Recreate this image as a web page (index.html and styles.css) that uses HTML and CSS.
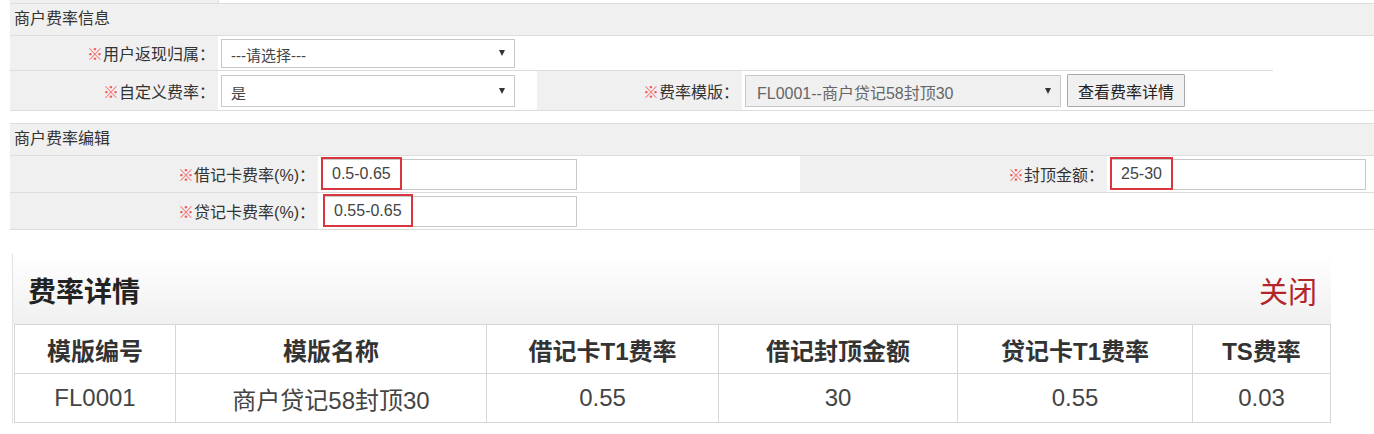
FILE: index.html
```html
<!DOCTYPE html>
<html lang="zh-CN">
<head>
    <meta charset="UTF-8">
    <title>商户费率</title>
    <link rel="stylesheet" href="styles.css">
</head>
<body>
    <div class="page">
        <div class="top-strip"><span class="strip-cell"></span></div>

        <section class="block">
            <div class="block-title">商户费率信息</div>
            <div class="row row-short">
                <div class="label w-208"><em>※</em>用户返现归属：</div>
                <div class="value">
                    <div class="select w-294"><span>---请选择---</span><i></i></div>
                </div>
            </div>
            <div class="row row-tall">
                <div class="label w-208"><em>※</em>自定义费率：</div>
                <div class="value w-319">
                    <div class="select w-294"><span>是</span><i></i></div>
                </div>
                <div class="label w-205"><em>※</em>费率模版：</div>
                <div class="value grow">
                    <div class="select disabled w-316"><span>FL0001--商户贷记58封顶30</span><i></i></div>
                    <button class="btn">查看费率详情</button>
                </div>
            </div>
        </section>

        <section class="block block-edit">
            <div class="block-title">商户费率编辑</div>
            <div class="row row-edit">
                <div class="label w-308"><em>※</em>借记卡费率(%)：</div>
                <div class="value w-482">
                    <div class="input w-256"><span class="mark">0.5-0.65</span></div>
                </div>
                <div class="label w-307"><em>※</em>封顶金额：</div>
                <div class="value grow">
                    <div class="input w-256"><span class="mark">25-30</span></div>
                </div>
            </div>
            <div class="row row-edit">
                <div class="label w-308"><em>※</em>贷记卡费率(%)：</div>
                <div class="value grow">
                    <div class="input w-254 shift"><span class="mark">0.55-0.65</span></div>
                </div>
            </div>
        </section>

        <div class="dialog">
            <div class="dialog-head">
                <h2>费率详情</h2>
                <a class="close" href="#">关闭</a>
            </div>
            <table class="detail">
                <thead>
                    <tr>
                        <th class="c1">模版编号</th>
                        <th class="c2">模版名称</th>
                        <th class="c3">借记卡T1费率</th>
                        <th class="c4">借记封顶金额</th>
                        <th class="c5">贷记卡T1费率</th>
                        <th class="c6">TS费率</th>
                    </tr>
                </thead>
                <tbody>
                    <tr>
                        <td>FL0001</td>
                        <td>商户贷记58封顶30</td>
                        <td>0.55</td>
                        <td>30</td>
                        <td>0.55</td>
                        <td>0.03</td>
                    </tr>
                </tbody>
            </table>
        </div>
    </div>
</body>
</html>
```

FILE: styles.css
```css
:root {
    --cell-bg: #f0f0f0;
    --line: #dcdcdc;
    --field-line: #c8c8c8;
    --text: #333;
    --star: #f05a5a;
    --mark: #d9363e;
}

body {
    margin: 0;
    font-family: "Liberation Sans", "Noto Sans CJK SC", sans-serif;
    color: var(--text);
    background: #fff;
}

.page {
    width: 1374px;
}

.top-strip {
    height: 3px;
    margin-left: 10px;
    border-bottom: 1px solid var(--line);
}

.strip-cell {
    display: block;
    width: 208px;
    height: 3px;
    background: var(--cell-bg);
    border-right: 1px solid var(--line);
}

.block {
    margin-left: 10px;
}

.block-title {
    height: 31px;
    line-height: 30px;
    padding-left: 4px;
    font-size: 16px;
    background: var(--cell-bg);
    border-bottom: 1px solid var(--line);
}

.row {
    display: flex;
    border-bottom: 1px solid var(--line);
}

.row-short {
    height: 34px;
    width: 1263px;
}

.row-tall {
    height: 39px;
}

.row-edit {
    height: 36px;
}

.label {
    flex: none;
    display: flex;
    align-items: center;
    justify-content: flex-end;
    padding-right: 3px;
    box-sizing: border-box;
    background: var(--cell-bg);
    font-size: 16px;
    color: #333;
}

.label em {
    font-style: normal;
    color: var(--star);
}

.value {
    flex: none;
    display: flex;
    align-items: center;
    gap: 6px;
    padding-left: 3px;
    box-sizing: border-box;
}

.value.grow {
    flex: 1;
}

.w-205 { width: 205px; }
.w-208 { width: 208px; }
.w-307 { width: 307px; }
.w-308 { width: 308px; }
.w-319 { width: 319px; }
.w-482 { width: 482px; }
.w-254 { width: 254px; }
.w-256 { width: 256px; }
.w-294 { width: 294px; }
.w-316 { width: 316px; }

.select {
    height: 29px;
    box-sizing: border-box;
    border: 1px solid var(--field-line);
    background: #fff;
    display: flex;
    align-items: center;
    justify-content: space-between;
    padding: 3px 9px 0 9px;
    font-size: 15px;
    color: #444;
}

.row-tall .select {
    height: 32px;
}

.select i {
    width: 0;
    height: 0;
    border-left: 3px solid transparent;
    border-right: 3px solid transparent;
    border-top: 6px solid #333;
    margin-top: -3px;
}

.select.disabled {
    background: var(--cell-bg);
    color: #666;
    padding-left: 11px;
    font-size: 16px;
}

.btn {
    height: 33px;
    padding: 0 10px;
    font-family: inherit;
    font-size: 16px;
    color: #222;
    background: var(--cell-bg);
    border: 1px solid #a8a8a8;
    border-radius: 1px;
}

.block-edit {
    margin-top: 12px;
}

.block-edit .block-title {
    border-top: 1px solid var(--line);
    height: 31px;
}

.input {
    height: 31px;
    box-sizing: border-box;
    border: 1px solid var(--field-line);
    background: #fff;
    display: flex;
    align-items: center;
}

.input.shift {
    margin-left: 2px;
}

.mark {
    display: inline-flex;
    align-items: center;
    height: 33px;
    margin: -1px 0 0 -1px;
    padding: 0 9px;
    box-sizing: border-box;
    border: 2px solid var(--mark);
    font-size: 16px;
    color: #444;
}

.dialog {
    margin: 24px 0 0 12px;
    width: 1318px;
    border-left: 1px solid #e2e2e2;
}

.dialog-head {
    height: 70px;
    display: flex;
    align-items: center;
    justify-content: space-between;
    padding: 0 14px 0 15px;
    background: linear-gradient(#ffffff, #f0f0f0);
}

.dialog-head h2 {
    margin: 0;
    font-size: 28px;
    font-weight: bold;
    color: #222;
    padding-top: 2px;
}

.close {
    font-size: 29px;
    color: #b3242b;
    text-decoration: none;
    padding-top: 2px;
}

.detail {
    width: 1316px;
    margin-left: 1px;
    border-collapse: collapse;
    table-layout: fixed;
    font-size: 24px;
}

.detail th,
.detail td {
    border: 1px solid #d6d6d6;
    text-align: center;
    height: 48px;
    padding: 0;
}

.detail th {
    font-weight: bold;
    color: #333;
}

.detail td {
    color: #444;
}

.c1 { width: 160px; }
.c2 { width: 310px; }
.c3 { width: 231px; }
.c4 { width: 238px; }
.c5 { width: 234px; }
.c6 { width: 137px; }
```
